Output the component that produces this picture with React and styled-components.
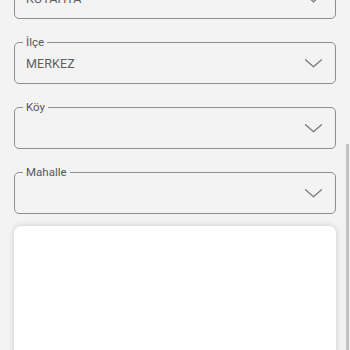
import React from "react";
import styled, { createGlobalStyle } from "styled-components";

const GlobalStyle = createGlobalStyle`
	html, body {
		margin: 0;
		padding: 0;
		background: #f3f3f3;
		font-family: Roboto, "Noto Sans", sans-serif;
		overflow: hidden;
	}
`;

const Page = styled.div`
	display: flex;
	flex-direction: column;
	padding: 0 14px;
	margin-top: -30px;
`;

const Field = styled.fieldset`
	margin: 0 0 16px;
	padding: 0 13px 0 8px;
	border: 1px solid #8e8e8e;
	border-radius: 5px;
	min-width: 0;
`;

const Legend = styled.legend`
	padding: 0 3px;
	font-size: 11.5px;
	line-height: 14px;
	color: #575757;
`;

const Row = styled.div`
	display: flex;
	align-items: center;
	justify-content: space-between;
	height: 34px;
	padding: 0 0 5px 3px;
	box-sizing: border-box;
`;

const Value = styled.span`
	font-size: 12.5px;
	color: #5e5e5e;
	letter-spacing: 0.1px;
`;

const Card = styled.div`
	margin-top: -4px;
	height: 220px;
	background: #fff;
	border-radius: 7px;
	box-shadow: 0 0 6px rgba(0, 0, 0, 0.17);
`;

const ScrollThumb = styled.div`
	position: fixed;
	right: 1px;
	top: 144px;
	width: 3px;
	height: 220px;
	background: #c2c2c2;
`;

const Chevron = () => (
	<svg width="17" height="9" viewBox="0 0 17 9" fill="none">
		<polyline
			points="0.5,0.8 8.5,7.8 16.5,0.8"
			stroke="#7a7a7a"
			strokeWidth="1.3"
			strokeLinecap="round"
			strokeLinejoin="round"
		/>
	</svg>
);

const fields = [
	{ label: "İl", value: "KÜTAHYA" },
	{ label: "İlçe", value: "MERKEZ" },
	{ label: "Köy", value: "" },
	{ label: "Mahalle", value: "" },
];

const App = () => (
	<>
		<GlobalStyle />
		<Page>
			{fields.map((f) => (
				<Field key={f.label}>
					<Legend>{f.label}</Legend>
					<Row>
						<Value>{f.value}</Value>
						<Chevron />
					</Row>
				</Field>
			))}
			<Card />
		</Page>
		<ScrollThumb />
	</>
);

export default App;
